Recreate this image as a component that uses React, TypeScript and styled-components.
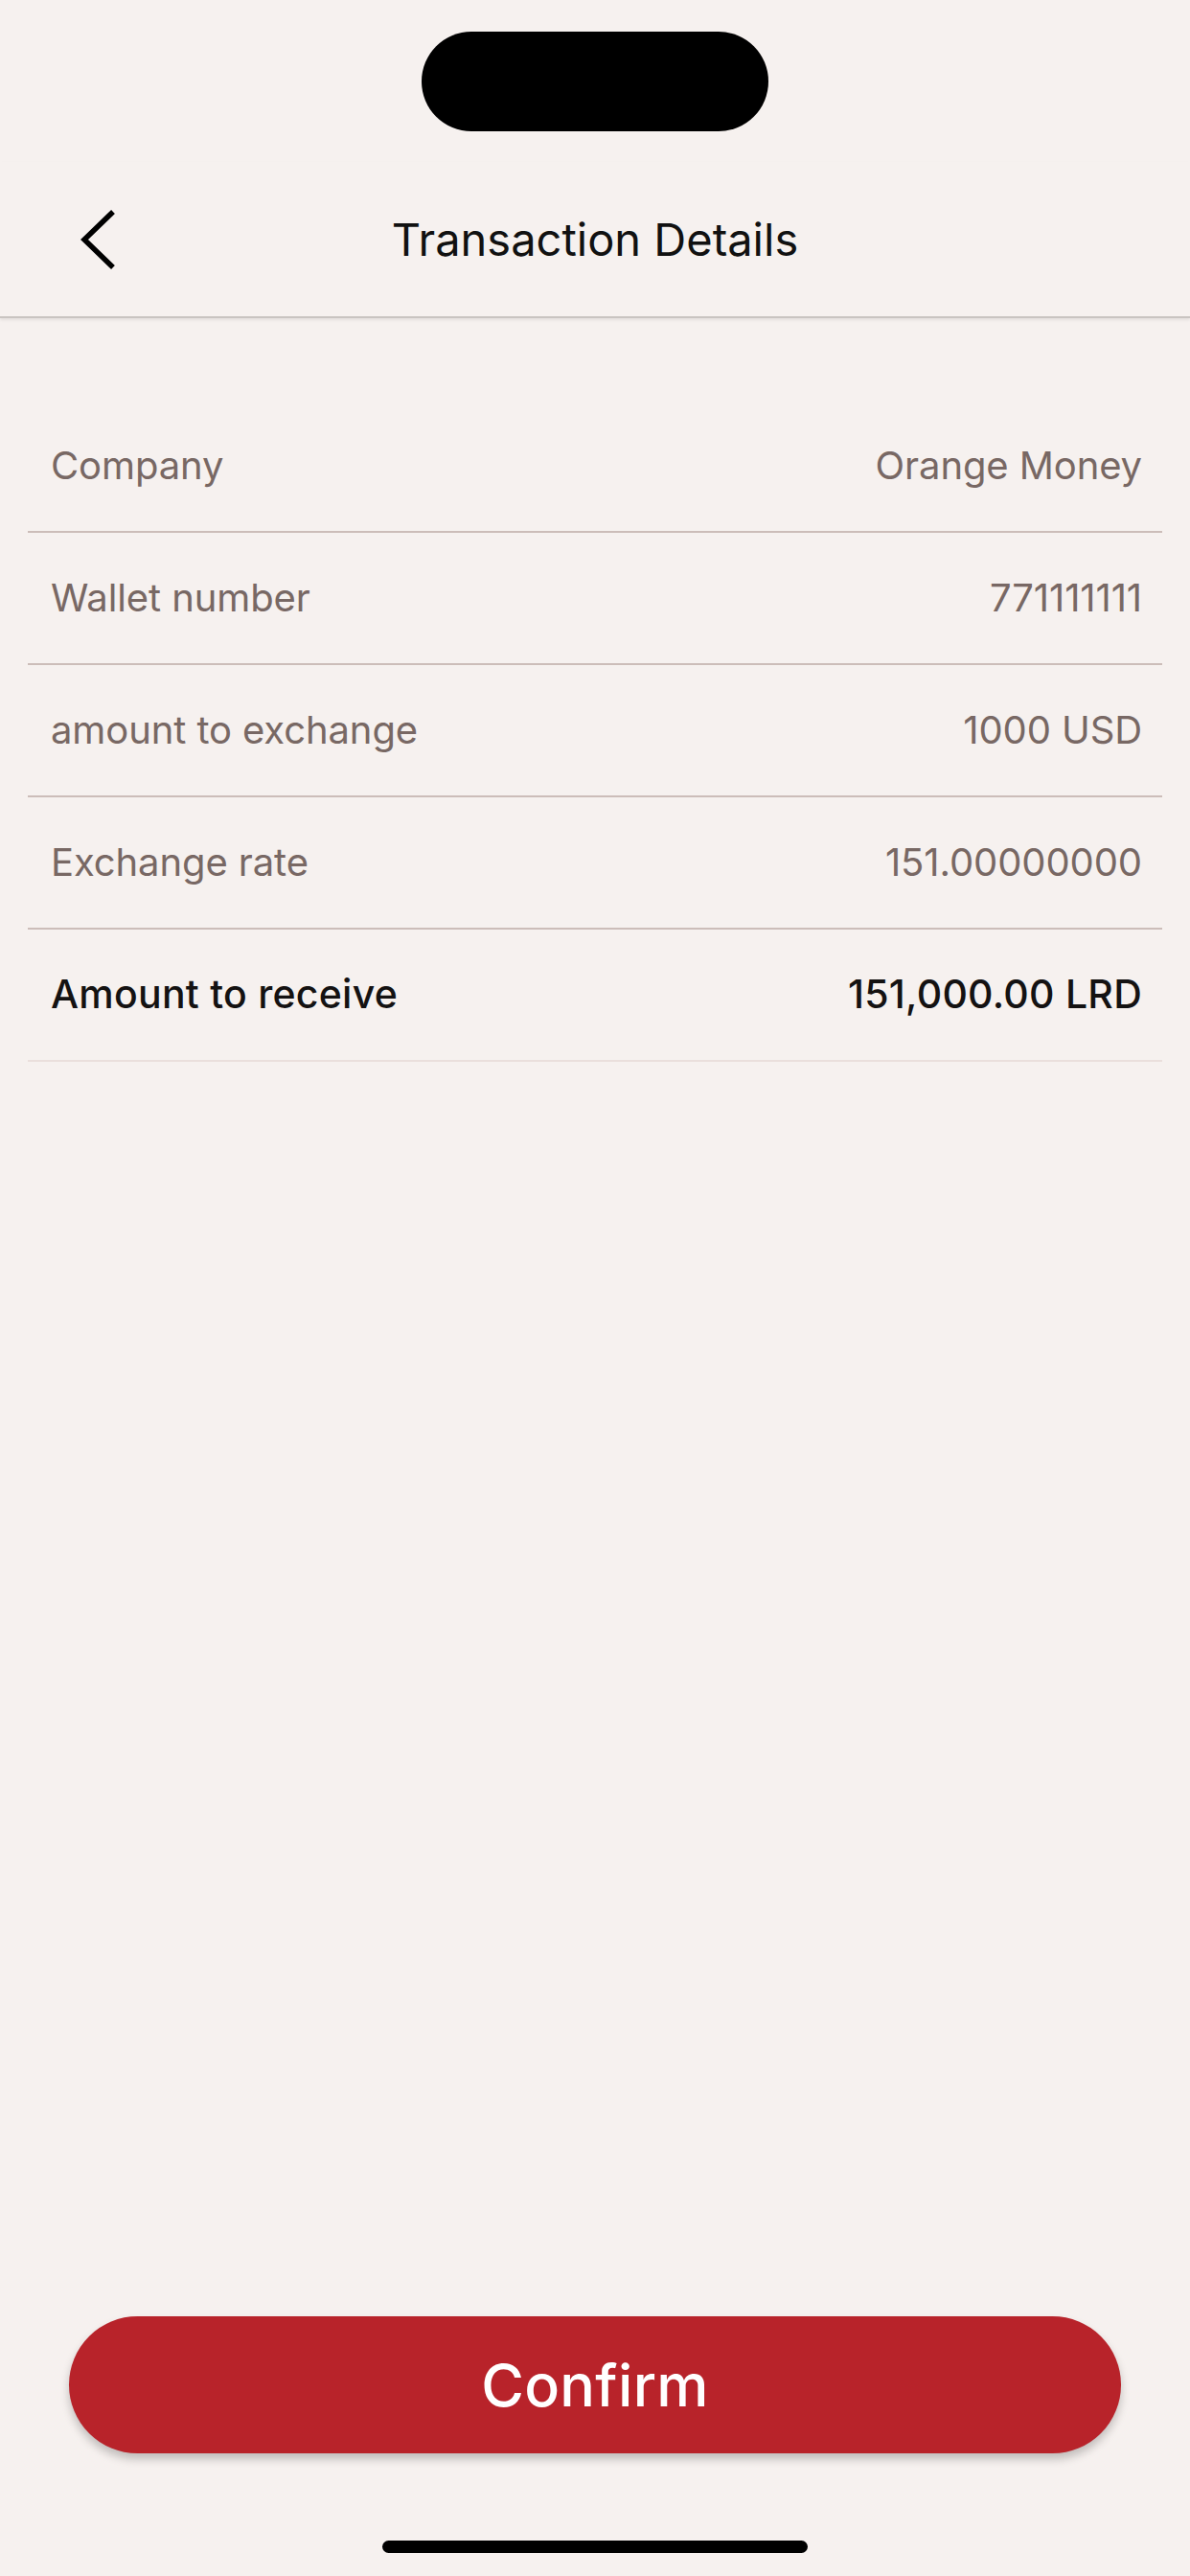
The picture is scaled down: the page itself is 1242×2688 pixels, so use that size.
import React from "react";
import styled, { createGlobalStyle } from "styled-components";

const Global = createGlobalStyle`
  html, body {
    margin: 0;
    padding: 0;
    background: #f6f1ef;
  }
  body {
    font-family: Inter, "Noto Sans", "Liberation Sans", sans-serif;
    -webkit-font-smoothing: antialiased;
  }
  * { box-sizing: border-box; }
`;

const Page = styled.div`
  width: 1242px;
  min-height: 2688px;
  background: #f6f1ef;
  display: flex;
  flex-direction: column;
`;

const StatusBar = styled.div`
  height: 169px;
  display: flex;
  justify-content: center;
  padding-top: 33px;
`;

const Island = styled.div`
  width: 362px;
  height: 104px;
  border-radius: 52px;
  background: #000;
`;

const NavBar = styled.div`
  height: 163px;
  display: flex;
  align-items: center;
  justify-content: center;
  position: relative;
  border-bottom: 2px solid #c9c4c1;
  box-shadow: 0 2px 3px rgba(0, 0, 0, 0.08);
`;

const BackButton = styled.button`
  position: absolute;
  left: 70px;
  top: 50%;
  transform: translateY(-50%);
  width: 64px;
  height: 80px;
  border: 0;
  background: transparent;
  padding: 0;
  display: flex;
  align-items: center;
  justify-content: center;
`;

const Title = styled.h1`
  margin: 0;
  font-size: 47px;
  font-weight: 400;
  color: #111;
  letter-spacing: 0;
`;

const List = styled.div`
  margin: 86px 29px 0;
  display: flex;
  flex-direction: column;
`;

const Row = styled.div<{ $last?: boolean }>`
  height: 138px;
  display: flex;
  align-items: center;
  justify-content: space-between;
  padding: 0 21px 2px 24px;
  border-bottom: 2px solid ${(p) => (p.$last ? "#eadfdc" : "#ccbdb9")};
`;

const Cell = styled.span<{ $strong?: boolean }>`
  font-size: ${(p) => (p.$strong ? "41px" : "40px")};
  font-weight: ${(p) => (p.$strong ? 500 : 400)};
  color: ${(p) => (p.$strong ? "#141212" : "#786864")};
  letter-spacing: ${(p) => (p.$strong ? "0.25px" : "-0.1px")};
`;

const Spacer = styled.div`
  flex: 1;
`;

const Footer = styled.div`
  display: flex;
  flex-direction: column;
  align-items: center;
  padding: 0 72px 24px;
`;

const ConfirmButton = styled.button`
  width: 100%;
  height: 143px;
  border: 0;
  border-radius: 72px;
  background: #b8232a;
  color: #fff;
  font-family: Inter, "Noto Sans", "Liberation Sans", sans-serif;
  font-size: 61px;
  font-weight: 500;
  box-shadow: 0 6px 10px rgba(0, 0, 0, 0.22);
  letter-spacing: 0.3px;
`;

const HomeIndicator = styled.div`
  margin-top: 91px;
  width: 444px;
  height: 13px;
  border-radius: 7px;
  background: #000;
`;

const rows: { label: string; value: string; strong?: boolean }[] = [
  { label: "Company", value: "Orange Money" },
  { label: "Wallet number", value: "771111111" },
  { label: "amount to exchange", value: "1000 USD" },
  { label: "Exchange rate", value: "151.00000000" },
  { label: "Amount to receive", value: "151,000.00 LRD", strong: true },
];

export default function App() {
  return (
    <Page>
      <Global />
      <StatusBar>
        <Island />
      </StatusBar>
      <NavBar>
        <BackButton aria-label="Back">
          <svg width="40" height="64" viewBox="0 0 40 64" fill="none">
            <path
              d="M34 5 L6 32 L34 59"
              stroke="#000"
              strokeWidth="5.5"
              strokeLinecap="square"
              strokeLinejoin="miter"
            />
          </svg>
        </BackButton>
        <Title>Transaction Details</Title>
      </NavBar>
      <List>
        {rows.map((r, i) => (
          <Row key={r.label} $last={i === rows.length - 1}>
            <Cell $strong={r.strong}>{r.label}</Cell>
            <Cell $strong={r.strong}>{r.value}</Cell>
          </Row>
        ))}
      </List>
      <Spacer />
      <Footer>
        <ConfirmButton>Confirm</ConfirmButton>
        <HomeIndicator />
      </Footer>
    </Page>
  );
}
